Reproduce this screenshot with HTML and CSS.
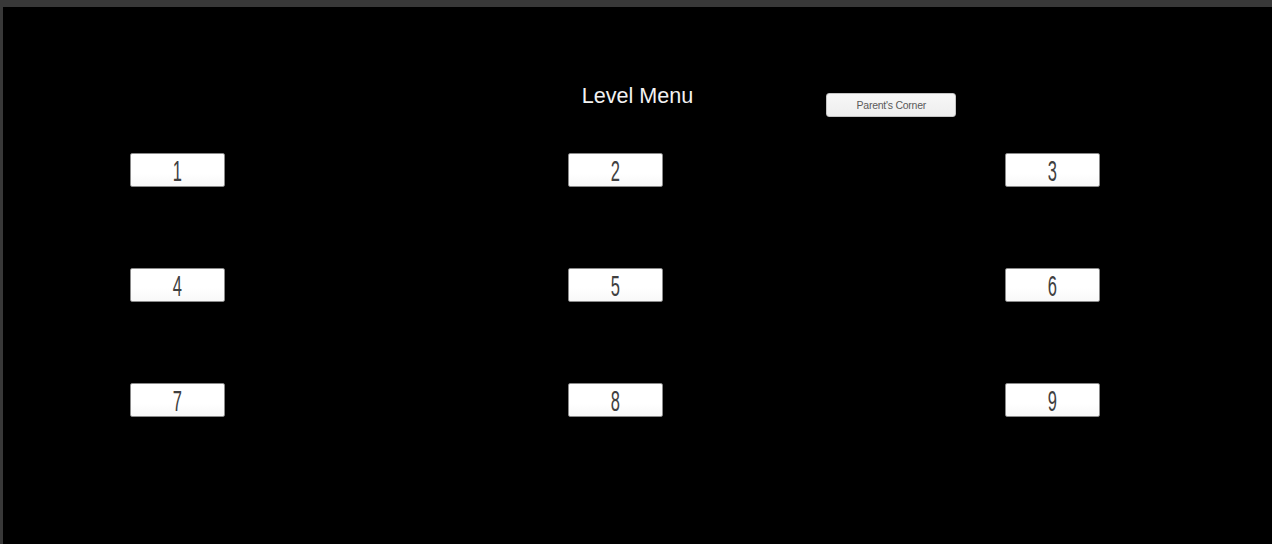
FILE: index.html
```html
<!DOCTYPE html>
<html lang="en">
<head>
<meta charset="utf-8">
<title>Level Menu</title>
<link rel="stylesheet" href="styles.css">
</head>
<body>
<main class="screen">
  <header class="header">
    <div class="header-side"></div>
    <h1 class="title">Level Menu</h1>
    <div class="header-side">
      <button class="parent-btn">Parent's Corner</button>
    </div>
  </header>
  <section class="levels">
    <button class="level-btn"><span class="num">1</span></button>
    <button class="level-btn"><span class="num">2</span></button>
    <button class="level-btn"><span class="num">3</span></button>
    <button class="level-btn"><span class="num">4</span></button>
    <button class="level-btn"><span class="num">5</span></button>
    <button class="level-btn"><span class="num">6</span></button>
    <button class="level-btn"><span class="num">7</span></button>
    <button class="level-btn"><span class="num">8</span></button>
    <button class="level-btn"><span class="num">9</span></button>
  </section>
</main>
</body>
</html>
```

FILE: styles.css
```css
html, body {
  margin: 0;
  padding: 0;
  height: 100%;
}

body {
  background: #383838;
  padding: 7px 0 0 3px;
  box-sizing: border-box;
  overflow: hidden;
  font-family: "Liberation Sans", Arial, sans-serif;
}

.screen {
  background: #000;
  height: 100%;
  width: 100%;
}

.header {
  display: grid;
  grid-template-columns: 1fr auto 1fr;
  height: 68px;
  padding-top: 77px;
}

.title {
  margin: 0;
  font-size: 21.6px;
  line-height: 24px;
  font-weight: normal;
  color: #f2f2f2;
}

.header-side {
  display: flex;
  align-items: flex-start;
}

.parent-btn {
  margin: 9px 0 0 133px;
  width: 130px;
  height: 24px;
  padding: 0;
  background: linear-gradient(#f7f7f7, #eeeeee);
  border: 1px solid #c4c4c4;
  border-radius: 3px;
  color: #5a5a5a;
  font-family: "Liberation Sans", Arial, sans-serif;
  font-size: 10.5px;
  letter-spacing: -0.25px;
}

.levels {
  display: grid;
  grid-template-columns: repeat(3, 95px);
  column-gap: 342.5px;
  row-gap: 81px;
  padding-left: 127px;
  padding-top: 1px;
}

.level-btn {
  width: 95px;
  height: 34px;
  padding: 0;
  background: linear-gradient(#ffffff 60%, #f8f8f8);
  border: 1px solid #8a8a8a;
  border-radius: 2px;
  display: flex;
  align-items: center;
  justify-content: center;
  overflow: hidden;
}

.num {
  display: inline-block;
  font-family: "Liberation Sans", Arial, sans-serif;
  font-size: 30px;
  line-height: 30px;
  color: #404040;
  transform: scaleX(0.55);
  margin-top: 2px;
}
```
